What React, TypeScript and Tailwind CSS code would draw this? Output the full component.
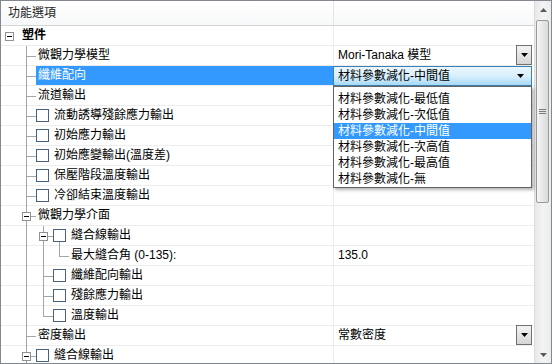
import type { ReactNode } from "react";

const LINE = "#a5a5a5";

// tree guide pieces, coordinates are page pixels (svg viewBox starts at x=1)
const V = ({ x, a = 0, b = 20 }: { x: number; a?: number; b?: number }) => (
  <line x1={x + 0.5} y1={a} x2={x + 0.5} y2={b} stroke={LINE} />
);
const H = ({ a, b }: { a: number; b: number }) => (
  <line x1={a} y1={10.5} x2={b} y2={10.5} stroke={LINE} />
);
const Box = ({ x }: { x: number }) => (
  <g>
    <rect x={x + 0.5} y={6.5} width={8} height={8} fill="#fff" stroke="#919191" />
    <line x1={x + 2} y1={10.5} x2={x + 7} y2={10.5} stroke="#000" />
  </g>
);
const Chk = ({ x }: { x: number }) => (
  <rect x={x + 0.5} y={3.5} width={12} height={12} fill="#fff" stroke="#47617f" />
);

const Gutter = ({ w, children }: { w: number; children: ReactNode }) => (
  <svg width={w - 1} height={20} viewBox={`1 0 ${w - 1} 20`} shapeRendering="crispEdges" className="shrink-0">
    {children}
  </svg>
);

const Arrow = () => (
  <svg width="7" height="4" viewBox="0 0 7 4">
    <path d="M0 0h7L3.5 4z" fill="#000" />
  </svg>
);

const DropButton = () => (
  <div className="-mt-px mr-[2px] flex h-[20px] w-[16px] shrink-0 items-center justify-center border border-[#707070] bg-gradient-to-b from-[#f3f3f3] to-[#d6d6d6]">
    <Arrow />
  </div>
);

const options = [
  "材料參數減化-最低值",
  "材料參數減化-次低值",
  "材料參數減化-中間值",
  "材料參數減化-次高值",
  "材料參數減化-最高值",
  "材料參數減化-無",
];

const FiberCombo = () => (
  <>
    <div className="-ml-px flex h-[20px] w-[199px] items-center justify-between border border-[#3c7fb1] bg-gradient-to-b from-[#eaf6fd] via-[#d9f0fc] to-[#a7d9f5] pl-[4px] pr-[7px]">
      <span>材料參數減化-中間值</span>
      <Arrow />
    </div>
    <div className="absolute top-[20px] left-[-1px] z-10 w-[199px] border border-[#646464] bg-white pt-[4px] shadow-[2px_2px_3px_rgba(0,0,0,0.3)]">
      {options.map((o) => (
        <div
          key={o}
          className={`h-[16px] pl-[4px] leading-[16px] ${o.endsWith("中間值") ? "bg-[#3399ff] text-white" : ""}`}
        >
          {o}
        </div>
      ))}
    </div>
  </>
);

type Row = {
  label: string;
  w: number;
  guide: ReactNode;
  bold?: boolean;
  selected?: boolean;
  value?: ReactNode;
};

const level1 = (
  <>
    <V x={26} />
    <H a={27} b={36} />
  </>
);
const level1Check = (
  <>
    <V x={26} />
    <H a={27} b={36} />
    <Chk x={36} />
  </>
);

const rows: Row[] = [
  { label: "塑件", bold: true, w: 22, guide: <Box x={5} /> },
  {
    label: "微觀力學模型",
    w: 38,
    guide: level1,
    value: (
      <>
        <span className="flex-1 pl-[4px]">Mori-Tanaka 模型</span>
        <DropButton />
      </>
    ),
  },
  { label: "纖維配向", w: 36, guide: level1, selected: true, value: <FiberCombo /> },
  { label: "流道輸出", w: 38, guide: level1 },
  { label: "流動誘導殘餘應力輸出", w: 54, guide: level1Check },
  { label: "初始應力輸出", w: 54, guide: level1Check },
  { label: "初始應變輸出(溫度差)", w: 54, guide: level1Check },
  { label: "保壓階段溫度輸出", w: 54, guide: level1Check },
  { label: "冷卻結束溫度輸出", w: 54, guide: level1Check },
  {
    label: "微觀力學介面",
    w: 38,
    guide: (
      <>
        <V x={26} a={0} b={6} />
        <V x={26} a={15} b={20} />
        <Box x={22} />
        <H a={31} b={36} />
      </>
    ),
  },
  {
    label: "縫合線輸出",
    w: 71,
    guide: (
      <>
        <V x={26} />
        <V x={43} a={0} b={6} />
        <V x={43} a={15} b={20} />
        <Box x={39} />
        <H a={48} b={53} />
        <V x={59} a={16} b={20} />
        <Chk x={53} />
      </>
    ),
  },
  {
    label: "最大縫合角 (0-135):",
    w: 71,
    guide: (
      <>
        <V x={26} />
        <V x={43} />
        <V x={59} a={0} b={11} />
        <H a={59} b={69} />
      </>
    ),
    value: <span className="pl-[4px]">135.0</span>,
  },
  {
    label: "纖維配向輸出",
    w: 71,
    guide: (
      <>
        <V x={26} />
        <V x={43} />
        <H a={44} b={53} />
        <Chk x={53} />
      </>
    ),
  },
  {
    label: "殘餘應力輸出",
    w: 71,
    guide: (
      <>
        <V x={26} />
        <V x={43} />
        <H a={44} b={53} />
        <Chk x={53} />
      </>
    ),
  },
  {
    label: "溫度輸出",
    w: 71,
    guide: (
      <>
        <V x={26} />
        <V x={43} a={0} b={11} />
        <H a={44} b={53} />
        <Chk x={53} />
      </>
    ),
  },
  {
    label: "密度輸出",
    w: 38,
    guide: level1,
    value: (
      <>
        <span className="flex-1 pl-[4px]">常數密度</span>
        <DropButton />
      </>
    ),
  },
  {
    label: "縫合線輸出",
    w: 54,
    guide: (
      <>
        <V x={26} a={0} b={6} />
        <V x={26} a={15} b={20} />
        <Box x={22} />
        <H a={31} b={36} />
        <Chk x={36} />
      </>
    ),
  },
];

const ScrollBar = () => (
  <div className="flex w-[17px] shrink-0 flex-col border-l border-[#dcdcdc] bg-gradient-to-r from-[#e8e8e8] via-[#f4f4f4] to-[#ececec]">
    <div className="flex h-[17px] items-center justify-center">
      <svg width="7" height="4" viewBox="0 0 7 4">
        <path d="M0 4h7L3.5 0z" fill="#5a5a5a" />
      </svg>
    </div>
    <div className="flex-1">
      <div className="mt-[2px] ml-[1px] flex h-[183px] w-[13px] items-center justify-center rounded-[2px] border border-[#9a9a9a] bg-gradient-to-r from-[#f6f6f6] to-[#d9d9d9]">
        <div className="flex w-[7px] flex-col gap-[1px]">
          <div className="h-px bg-[#7a7a7a]" />
          <div className="h-px bg-[#7a7a7a]" />
          <div className="h-px bg-[#7a7a7a]" />
        </div>
      </div>
    </div>
    <div className="flex h-[17px] items-center justify-center">
      <svg width="7" height="4" viewBox="0 0 7 4">
        <path d="M0 0h7L3.5 4z" fill="#5a5a5a" />
      </svg>
    </div>
  </div>
);

export default function App() {
  return (
    <div className="flex h-[364px] w-[552px] overflow-hidden border border-[#828790] bg-white font-['Liberation_Sans','Noto_Sans_CJK_TC',sans-serif] text-[12px] text-black">
      <div className="flex min-w-0 flex-1 flex-col">
        {/* header */}
        <div className="flex h-[25px] shrink-0 border-b border-[#d5d5d5] bg-gradient-to-b from-white to-[#f7f8f9]">
          <div className="w-[333px] border-r border-[#e5e5e5] pl-[7px] leading-[24px] text-[#1e1e1e]">功能選項</div>
          <div className="flex-1" />
        </div>

        {/* property rows */}
        {rows.map((r, i) => (
          <div key={i} className="flex h-[20px] shrink-0 border-b border-[#ededed]">
            <div className="flex w-[333px] shrink-0 items-start border-r border-[#ededed]">
              <Gutter w={r.w}>{r.guide}</Gutter>
              <div
                className={`flex-1 self-stretch leading-[19px] ${r.bold ? "font-bold" : ""} ${
                  r.selected ? "bg-[#3399ff] pl-[2px] text-white" : ""
                }`}
              >
                {r.label}
              </div>
            </div>
            <div className="relative flex flex-1 items-start leading-[19px]">{r.value}</div>
          </div>
        ))}
      </div>
      <ScrollBar />
    </div>
  );
}
